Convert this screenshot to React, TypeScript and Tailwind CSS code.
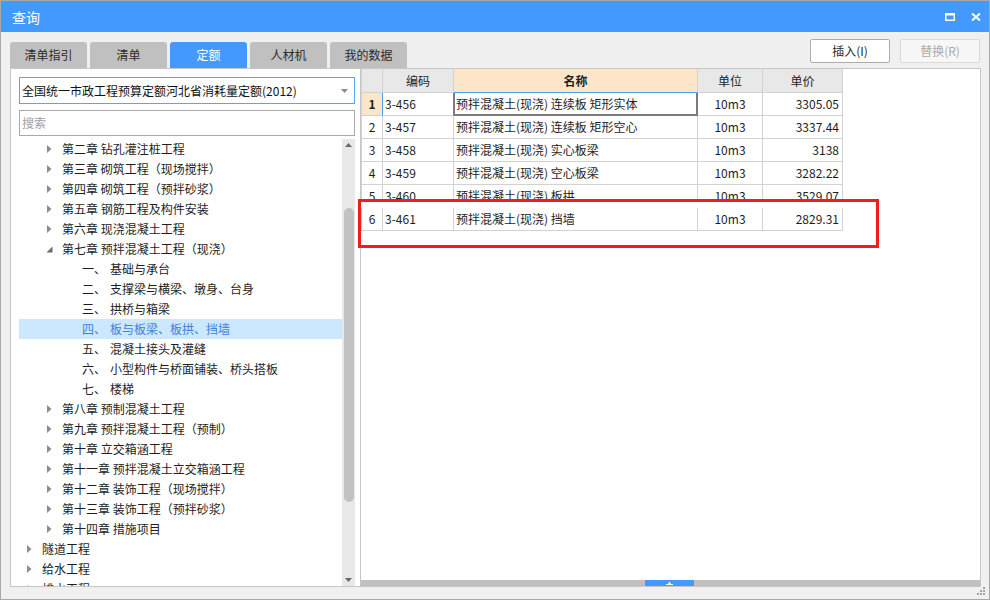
import React from "react"

type TreeNode = {
  label: string
  num?: string
  level: 0 | 1 | 2
  open?: boolean
  selected?: boolean
}

const tree: TreeNode[] = [
  { level: 1, label: "第二章 钻孔灌注桩工程" },
  { level: 1, label: "第三章 砌筑工程（现场搅拌）" },
  { level: 1, label: "第四章 砌筑工程（预拌砂浆）" },
  { level: 1, label: "第五章 钢筋工程及构件安装" },
  { level: 1, label: "第六章 现浇混凝土工程" },
  { level: 1, label: "第七章 预拌混凝土工程（现浇）", open: true },
  { level: 2, num: "一、", label: "基础与承台" },
  { level: 2, num: "二、", label: "支撑梁与横梁、墩身、台身" },
  { level: 2, num: "三、", label: "拱桥与箱梁" },
  { level: 2, num: "四、", label: "板与板梁、板拱、挡墙", selected: true },
  { level: 2, num: "五、", label: "混凝土接头及灌缝" },
  { level: 2, num: "六、", label: "小型构件与桥面铺装、桥头搭板" },
  { level: 2, num: "七、", label: "楼梯" },
  { level: 1, label: "第八章 预制混凝土工程" },
  { level: 1, label: "第九章 预拌混凝土工程（预制）" },
  { level: 1, label: "第十章 立交箱涵工程" },
  { level: 1, label: "第十一章 预拌混凝土立交箱涵工程" },
  { level: 1, label: "第十二章 装饰工程（现场搅拌）" },
  { level: 1, label: "第十三章 装饰工程（预拌砂浆）" },
  { level: 1, label: "第十四章 措施项目" },
  { level: 0, label: "隧道工程" },
  { level: 0, label: "给水工程" },
  { level: 0, label: "排水工程" },
]

const rows = [
  { code: "3-456", name: "预拌混凝土(现浇) 连续板 矩形实体", unit: "10m3", price: "3305.05" },
  { code: "3-457", name: "预拌混凝土(现浇) 连续板 矩形空心", unit: "10m3", price: "3337.44" },
  { code: "3-458", name: "预拌混凝土(现浇) 实心板梁", unit: "10m3", price: "3138" },
  { code: "3-459", name: "预拌混凝土(现浇) 空心板梁", unit: "10m3", price: "3282.22" },
  { code: "3-460", name: "预拌混凝土(现浇) 板拱", unit: "10m3", price: "3529.07" },
  { code: "3-461", name: "预拌混凝土(现浇) 挡墙", unit: "10m3", price: "2829.31" },
]

const tabs = ["清单指引", "清单", "定额", "人材机", "我的数据"]

function Caret({ open }: { open?: boolean }) {
  if (open) {
    return (
      <svg width="7" height="7" viewBox="0 0 7 7">
        <path d="M6.5 0.5V6.5H0.5Z" fill="#6b6b6b" />
      </svg>
    )
  }
  return (
    <svg width="5" height="8" viewBox="0 0 5 8">
      <path d="M0 0L4.5 4L0 8Z" fill="#8c8c8c" />
    </svg>
  )
}

function TreeRow({ node }: { node: TreeNode }) {
  const base = node.selected ? "bg-[#cce8ff] text-[#3d7fd9]" : "text-[#1e1e1e]"
  if (node.level === 2) {
    return (
      <div className={`flex items-center h-[20px] pl-[63px] whitespace-nowrap ${base}`}>
        <span className="w-[28px]">{node.num}</span>
        <span>{node.label}</span>
      </div>
    )
  }
  return (
    <div
      className={`flex items-center h-[20px] whitespace-nowrap ${base} ${
        node.level === 0 ? "pl-[8px]" : node.open ? "pl-[27px]" : "pl-[28px]"
      }`}
    >
      <span className={`flex items-center ${node.open ? "w-[16px]" : "w-[15px]"}`}>
        <Caret open={node.open} />
      </span>
      <span>{node.label}</span>
    </div>
  )
}

export default function App() {
  return (
    <div className="relative w-[990px] h-[600px] border border-[#a8a8a8] bg-[#f0f0f0] flex flex-col overflow-hidden font-['Noto_Sans_CJK_SC',sans-serif] text-[12px]">
      {/* Title bar */}
      <div className="h-[31px] bg-[#4499ff] flex items-center justify-between pl-[11px] pr-[8px] shrink-0">
        <span className="text-white text-[14px] leading-none">查询</span>
        <div className="flex items-center gap-[16px]">
          <svg width="10" height="8" viewBox="0 0 10 8">
            <rect x="0" y="0" width="10" height="2.5" fill="#fff" />
            <path d="M0.75 0.75H9.25V7.25H0.75Z" stroke="#fff" strokeWidth="1.5" fill="none" />
          </svg>
          <svg width="10" height="8" viewBox="0 0 10 8">
            <path d="M1 0.5L9 7.5M9 0.5L1 7.5" stroke="#fff" strokeWidth="2" />
          </svg>
        </div>
      </div>

      <div className="flex-1 flex flex-col pl-[9px] pr-[8px]">
        {/* Tabs and buttons */}
        <div className="flex justify-between h-[36px] shrink-0">
          <div className="flex gap-[3px] mt-[10px]">
            {tabs.map((t) => (
              <div
                key={t}
                className={`w-[77px] h-[26px] rounded-t-[3px] flex items-center justify-center text-[12px] ${
                  t === "定额" ? "bg-[#4499ff] text-white" : "bg-[#c0c0c0] text-[#2a2a2a]"
                }`}
              >
                {t}
              </div>
            ))}
          </div>
          <div className="flex gap-[10px] mt-[7px] mr-[1px]">
            <button className="w-[80px] h-[24px] rounded-[2px] border border-[#adadad] bg-white text-[#2a2a2a] text-[12px]">
              插入(I)
            </button>
            <button className="w-[80px] h-[24px] rounded-[2px] border border-[#dadada] bg-[#f7f7f7] text-[#ababab] text-[12px]">
              替换(R)
            </button>
          </div>
        </div>

        {/* Panels */}
        <div className="flex h-[519px] border border-[#c6c6c6] bg-white shrink-0">
          {/* Left panel */}
          <div className="w-[350px] border-r border-[#c6c6c6] flex flex-col pl-[8px] pt-[8px]">
            <div className="w-[336px] h-[27px] border border-[#5ea3f0] flex items-center justify-between pl-[2px] pr-[6px] text-[#111]">
              <span>全国统一市政工程预算定额河北省消耗量定额(2012)</span>
              <svg width="7" height="4" viewBox="0 0 7 4">
                <path d="M0 0H7L3.5 4Z" fill="#8a8a8a" />
              </svg>
            </div>
            <div className="mt-[6px] w-[336px] h-[26px] border border-[#a9a9a9] flex items-center pl-[2px] text-[#a0a0a0]">
              搜索
            </div>
            <div className="mt-[3px] flex flex-1 min-h-0">
              <div className="w-[323px] overflow-hidden">
                {tree.map((n, i) => (
                  <TreeRow key={i} node={n} />
                ))}
              </div>
              <div className="w-[13px] bg-[#e8e8e8] flex flex-col items-center">
                <svg className="mt-[4px]" width="7" height="4" viewBox="0 0 7 4">
                  <path d="M0 4H7L3.5 0Z" fill="#6a6a6a" />
                </svg>
                <div className="mt-[61px] w-[10px] h-[294px] rounded-full bg-[#c2c2c2]" />
                <div className="flex-1" />
                <svg className="mb-[4px]" width="7" height="4" viewBox="0 0 7 4">
                  <path d="M0 0H7L3.5 4Z" fill="#6a6a6a" />
                </svg>
              </div>
            </div>
          </div>

          {/* Right panel */}
          <div className="flex-1 flex flex-col">
            <div className="flex-1">
              <div className="w-[482px] border-l border-[#d2d2d2] grid grid-cols-[21px_71px_244px_65px_80px] text-[#1e1e1e]">
                <div className="h-[24px] bg-[#e8e8e8] border-r border-b border-[#d2d2d2]" />
                <div className="h-[24px] bg-[#e8e8e8] border-r border-b border-[#d2d2d2] flex items-center justify-center">编码</div>
                <div className="h-[24px] bg-[#fde6c8] border-r border-b border-[#d2d2d2] border-b-[#4a9cf0] flex items-center justify-center font-bold">名称</div>
                <div className="h-[24px] bg-[#e8e8e8] border-r border-b border-[#d2d2d2] flex items-center justify-center">单位</div>
                <div className="h-[24px] bg-[#e8e8e8] border-r border-b border-[#d2d2d2] flex items-center justify-center">单价</div>
                {rows.map((r, i) => {
                  const first = i === 0
                  return (
                    <React.Fragment key={r.code}>
                      <div
                        className={`h-[23px] border-r border-b border-[#d2d2d2] flex items-center justify-center ${
                          first ? "bg-[#fde6c8] font-bold border-r-[#4a9cf0]" : ""
                        }`}
                      >
                        {i + 1}
                      </div>
                      <div
                        className={`h-[23px] border-r border-b border-[#d2d2d2] flex items-center pl-[2px] ${
                          first ? "border-r-[#7c7c7c]" : ""
                        }`}
                      >
                        {r.code}
                      </div>
                      <div
                        className={`h-[23px] border-r border-b flex items-center pl-[2px] whitespace-nowrap ${
                          first
                            ? "border-[#7c7c7c] shadow-[inset_1px_0_0_#7c7c7c,inset_-1px_0_0_#7c7c7c,inset_0_-1px_0_#7c7c7c]"
                            : "border-[#d2d2d2]"
                        }`}
                      >
                        {r.name}
                      </div>
                      <div className="h-[23px] border-r border-b border-[#d2d2d2] flex items-center justify-center">
                        {r.unit}
                      </div>
                      <div className="h-[23px] border-r border-b border-[#d2d2d2] flex items-center justify-end pr-[3px]">
                        {r.price}
                      </div>
                    </React.Fragment>
                  )
                })}
              </div>
            </div>
            <div className="h-[6px] bg-[#c0c0c0] flex">
              <div className="ml-[284px] w-[49px] h-full bg-[#4499ff] flex items-center justify-center">
                <svg width="7" height="4" viewBox="0 0 7 4">
                  <path d="M0 4H7V3H5L3.5 0.5L2 3H0Z" fill="#fff" />
                </svg>
              </div>
            </div>
          </div>
        </div>
      </div>

      {/* Annotation box over the table */}
      <div className="absolute left-[357px] top-[198px] w-[521px] h-[49px] border-[3px] border-[#f31c1c]">
        <div className="h-[6px] bg-white" />
      </div>

      {/* Resize grip */}
      <svg className="absolute right-[3px] bottom-[3px]" width="9" height="9" viewBox="0 0 9 9">
        <g fill="#a3a3a3">
          <rect x="6" y="0" width="2" height="2" />
          <rect x="3" y="3" width="2" height="2" />
          <rect x="6" y="3" width="2" height="2" />
          <rect x="0" y="6" width="2" height="2" />
          <rect x="3" y="6" width="2" height="2" />
          <rect x="6" y="6" width="2" height="2" />
        </g>
      </svg>
    </div>
  )
}
